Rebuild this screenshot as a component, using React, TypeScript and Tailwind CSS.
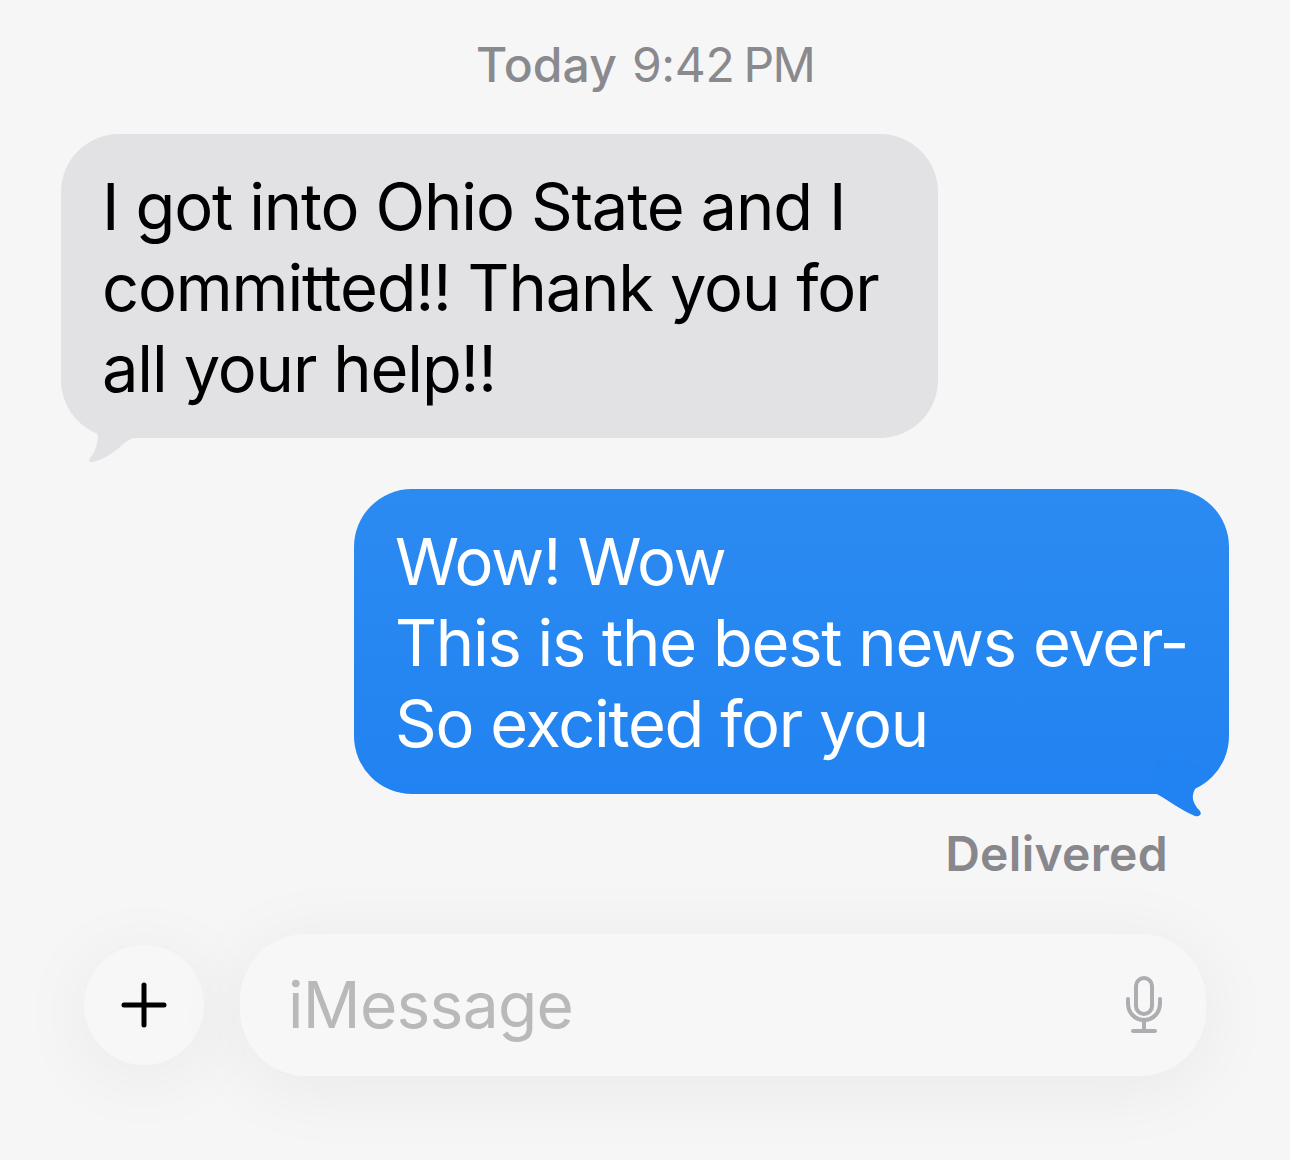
const sans = 'font-["Inter","Liberation_Sans",sans-serif]'

export default function App() {
  return (
    <div className={`relative h-[1160px] w-[1290px] overflow-hidden bg-[#f6f6f6] ${sans}`}>
      {/* Timestamp */}
      <div className="flex h-[134px] justify-center pt-[33px] text-[48px] leading-[64px] tracking-[-0.3px] text-[#8a8a8e]">
        <span className="font-medium tracking-[0.1px]">Today</span>
        <span className="ml-[15px]">9:42</span>
        <span className="ml-[9px] tracking-[-1.8px]">PM</span>
      </div>

      {/* Incoming */}
      <div className="relative ml-[61px] h-[304px] w-[877px] rounded-[58px] bg-[#e2e2e5] pl-[41px] pt-[32px] text-[65px] leading-[81px] tracking-[-1.15px] text-black">
        <div>I got into Ohio State and I</div>
        <div>committed!! Thank you for</div>
        <div>all your help!!</div>
        <svg className="absolute bottom-[-32px] left-[-1px] h-[70px] w-[90px]" viewBox="0 0 90 70">
          <path
            d="M35 30 C39 34 38 38 37 43 C36 50 33 54 30 58 C28 61 30 63 33 62 C42 60 52 54 60 47 C65 42 70 38 76 38 L76 10 L35 10 Z"
            fill="#e2e2e5"
          />
        </svg>
      </div>

      {/* Outgoing */}
      <div className="relative ml-[354px] mt-[51px] h-[305px] w-[875px] rounded-[58px] bg-gradient-to-b from-[#2c8bf1] to-[#2183f1] pl-[41px] pt-[32px] text-[65px] leading-[81px] tracking-[-1.25px] text-white">
        <div>Wow! Wow</div>
        <div>This is the best news ever-</div>
        <div>So excited for you</div>
        <svg className="absolute bottom-[-36px] right-[-1px] h-[80px] w-[90px]" viewBox="0 0 90 80">
          <path
            d="M15 43 C28 50 42 61 55 66 C60 67 62 64 60 61 C55 56 52 50 53 45 C54 37 62 30 73 20 L40 10 L15 10 Z"
            fill="#2183f1"
          />
        </svg>
      </div>

      <div className="mr-[122px] mt-[28px] text-right text-[48px] font-semibold leading-[64px] tracking-[0.3px] text-[#87878c]">
        Delivered
      </div>

      {/* Composer */}
      <div className="absolute bottom-[84px] left-[84px] flex items-center gap-[36px]">
        <div className="flex h-[120px] w-[120px] items-center justify-center rounded-full bg-[#f7f7f7] shadow-[0_10px_80px_rgba(0,0,0,0.06)]">
          <svg width="50" height="50" viewBox="0 0 50 50" fill="none" stroke="#000" strokeWidth="5" strokeLinecap="round">
            <path d="M25 5 V45 M5 25 H45" />
          </svg>
        </div>
        <div className="flex h-[142px] w-[966px] items-center justify-between rounded-[66px] bg-[#f7f7f7] pl-[48px] pr-[43px] shadow-[0_10px_80px_rgba(0,0,0,0.06)]">
          <span className="text-[64px] tracking-[-0.7px] text-[#b9b9bc]">iMessage</span>
          <svg width="38" height="58" viewBox="0 0 38 58" fill="none" stroke="#adadb2" strokeWidth="4" strokeLinecap="round">
            <rect x="11" y="2" width="16" height="36" rx="8" />
            <path d="M3 23 V27 C3 37 10 44 19 44 C28 44 35 37 35 27 V23" />
            <path d="M19 44 V55 M8 55 H30" />
          </svg>
        </div>
      </div>
    </div>
  )
}
